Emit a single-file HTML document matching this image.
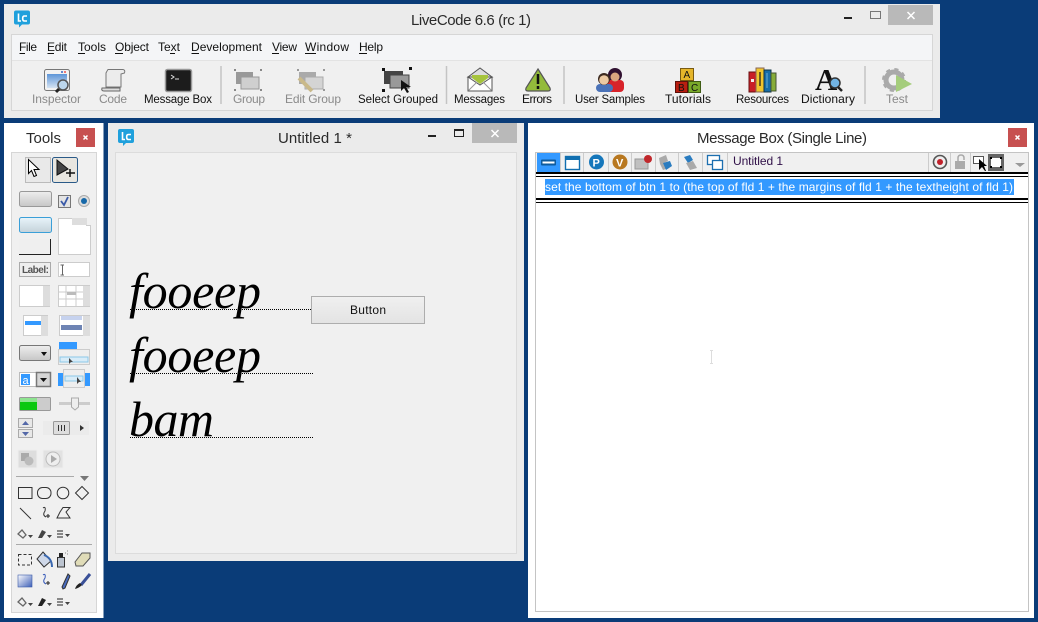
<!DOCTYPE html>
<html><head><meta charset="utf-8"><style>
html,body{margin:0;padding:0;background:#0a3c78;width:1038px;height:622px;overflow:hidden}
svg{display:block;position:absolute;left:0;top:0}
text{font-family:"Liberation Sans",sans-serif;font-size:12px;fill:#111}
.t{font-size:15px;fill:#2a2a2a}
.g{fill:#8a8a8a}
.n{font-size:11.5px}
.i{font-family:"Liberation Serif",serif;font-style:italic;font-size:50px;fill:#000}
.u{stroke:#111;stroke-width:1}
</style></head><body>
<svg width="1038" height="622" viewBox="0 0 1038 622" xmlns="http://www.w3.org/2000/svg">
<defs>
<linearGradient id="bt" x1="0" y1="0" x2="0" y2="1"><stop offset="0" stop-color="#f0f0f0"/><stop offset="1" stop-color="#e3e3e3"/></linearGradient>
<linearGradient id="bg" x1="0" y1="0" x2="0" y2="1"><stop offset="0" stop-color="#eee"/><stop offset="1" stop-color="#c6c6c6"/></linearGradient>
<linearGradient id="bb" x1="0" y1="0" x2="0" y2="1"><stop offset="0" stop-color="#e8f4fa"/><stop offset="1" stop-color="#c4d2da"/></linearGradient>
<linearGradient id="gr" x1="0" y1="0" x2="1" y2="1"><stop offset="0" stop-color="#fff"/><stop offset="1" stop-color="#3e60b8"/></linearGradient>
<linearGradient id="ins" x1="0" y1="0" x2="0" y2="1"><stop offset="0" stop-color="#5d95d8"/><stop offset="1" stop-color="#d5e3f2"/></linearGradient>
<g id="lc"><path d="M2 0H14Q16 0 16 2V12Q16 14 14 14H8L5 17V14H2Q0 14 0 12V2Q0 0 2 0Z" fill="#1fa0dc"/><path d="M4.500 3V10.500H7M13 5.500H10.500Q8.700 5.500 8.700 7.500V8.500Q8.700 10.500 10.500 10.500H13" fill="none" stroke="#fff" stroke-width="1.600"/></g>
<g id="ar"><path d="M0 0V14L3 11L5.500 17L8 16L5.500 10H10.500Z" fill="#fff" stroke="#000"/></g>
</defs>

<!-- main window -->
<rect x="4" y="4" width="936" height="114" fill="#ebebeb"/>
<use href="#lc" x="14" y="10.500"/>
<text class="t" x="411" y="25" textLength="120">LiveCode 6.6 (rc 1)</text>
<rect x="844" y="17" width="8" height="2" fill="#222"/>
<rect x="870.500" y="11.500" width="10" height="7" fill="none" stroke="#777"/>
<rect x="888" y="5" width="45" height="20" fill="#b9b9b9"/>
<path d="M907.500 12L914.500 19M914.500 12L907.500 19" stroke="#fff" stroke-width="1.500"/>
<rect x="11.500" y="34.500" width="921" height="76" fill="#f0f0f0" stroke="#d6d6d6"/>
<rect x="12" y="35" width="920" height="25" fill="#f4f5f7"/>
<path d="M12 60.500H932" stroke="#e3e3e3"/>
<g>
<text x="19" y="51" textLength="18">File</text><path class="u" d="M19.500 53.500H25"/>
<text x="47" y="51" textLength="20">Edit</text><path class="u" d="M47.500 53.500H54"/>
<text x="78" y="51" textLength="28">Tools</text><path class="u" d="M78 53.500H85"/>
<text x="115" y="51" textLength="34">Object</text><path class="u" d="M115 53.500H123"/>
<text x="158" y="51" textLength="22">Text</text><path class="u" d="M170 53.500H175"/>
<text x="191" y="51" textLength="71">Development</text><path class="u" d="M191.500 53.500H199"/>
<text x="272" y="51" textLength="25">View</text><path class="u" d="M272 53.500H279"/>
<text x="305" y="51" textLength="44">Window</text><path class="u" d="M305 53.500H316"/>
<text x="359" y="51" textLength="24">Help</text><path class="u" d="M359 53.500H367"/>
</g>
<g>
<text class="g" x="32" y="103" textLength="49">Inspector</text>
<text class="g" x="99" y="103" textLength="28">Code</text>
<text class="n" x="144" y="103" textLength="68">Message Box</text>
<text class="g" x="233" y="103" textLength="32">Group</text>
<text class="g" x="285" y="103" textLength="56">Edit Group</text>
<text class="n" x="358" y="103" textLength="80">Select Grouped</text>
<text class="n" x="454" y="103" textLength="51">Messages</text>
<text x="522" y="103" textLength="30">Errors</text>
<text class="n" x="575" y="103" textLength="70">User Samples</text>
<text x="665" y="103" textLength="46">Tutorials</text>
<text class="n" x="736" y="103" textLength="53">Resources</text>
<text x="801" y="103" textLength="54">Dictionary</text>
<text class="g" x="886" y="103" textLength="22">Test</text>
</g>
<path d="M221 66V104M446.500 66V104M564 66V104M865 66V104" stroke="#c4c4c4" stroke-width="1.500"/>

<!-- inspector -->
<rect x="44.500" y="69.500" width="25" height="21" rx="2" fill="#f2f2f2" stroke="#777"/>
<rect x="47" y="74" width="20" height="14" fill="url(#ins)"/>
<rect x="64" y="71" width="2" height="2" fill="#e77"/><rect x="61" y="71" width="2" height="2" fill="#68c"/>
<circle cx="63" cy="85" r="5" fill="#bcd6ec" stroke="#555" stroke-width="1.500"/><path d="M59 89L56 92" stroke="#222" stroke-width="3"/>
<!-- code -->
<path d="M108 69.500H123Q125.500 70 124.500 73L121 74V87H106V73Q107 71 108 69.500Z" fill="#ececec" stroke="#777"/>
<path d="M102 88H120V91H104Q101 91 102 88Z" fill="#ddd" stroke="#666"/>
<!-- message box -->
<rect x="165.500" y="69.500" width="26" height="22" rx="2" fill="#1c1c1c" stroke="#999" stroke-width="1.500"/>
<path d="M171 75L174 77L171 79M175 79H179" stroke="#ddd" fill="none"/>
<!-- group -->
<rect x="236" y="72" width="17" height="12" fill="#999"/>
<rect x="241" y="77" width="18" height="12" fill="#cfcfcf" stroke="#999"/>
<g fill="#888"><rect x="234" y="69" width="2" height="2"/><rect x="260" y="69" width="2" height="2"/><rect x="234" y="89" width="2" height="2"/><rect x="260" y="89" width="2" height="2"/></g>
<!-- edit group -->
<rect x="299" y="72" width="17" height="12" fill="#aaa"/>
<rect x="305" y="77" width="18" height="12" fill="#d4d4d4" stroke="#aaa"/>
<path d="M299 78L312 91" stroke="#c9b98a" stroke-width="4"/>
<g fill="#999"><rect x="297" y="69" width="2" height="2"/><rect x="323" y="69" width="2" height="2"/><rect x="323" y="89" width="2" height="2"/></g>
<!-- select grouped -->
<rect x="384" y="71" width="19" height="13" fill="#444"/>
<rect x="390" y="75" width="19" height="13" fill="#999" stroke="#444"/>
<g fill="#111"><rect x="382" y="68" width="3" height="3"/><rect x="409" y="67" width="3" height="3"/><rect x="382" y="89" width="3" height="3"/></g>
<path d="M401 80V91L404 88L407 93L409 92L406 87H411Z" fill="#111"/>
<!-- messages -->
<path d="M468 77L480 68L492 77Z" fill="#ddd" stroke="#555"/>
<path d="M468 77L480 85L492 77V91H468Z" fill="#fff" stroke="#555"/>
<path d="M472 75H488V78L480 84L472 78Z" fill="#a6c43c"/>
<path d="M468.500 90.500L477 82M491.500 90.500L483 82" stroke="#999"/>
<!-- errors -->
<path d="M538 69L550 88Q551 91 548 91H528Q525 91 526 88Z" fill="#93bb3b" stroke="#555" stroke-width="1.200"/>
<path d="M538 74V84M538 86V89" stroke="#111" stroke-width="2.500"/>
<!-- users -->
<circle cx="615" cy="75" r="7" fill="#301030"/><rect x="605" y="80" width="19" height="12" rx="4" fill="#d8232a"/><circle cx="615" cy="77" r="4.500" fill="#d9a47f"/>
<rect x="596" y="84" width="17" height="8" rx="4" fill="#4a72b8"/>
<circle cx="604" cy="79" r="6" fill="#3c2a20"/><circle cx="604" cy="80" r="4.800" fill="#ecc9a2"/>
<!-- blocks -->
<rect x="680.500" y="68.500" width="13" height="12" fill="#e5b52a" stroke="#7a5b12"/><rect x="675.500" y="81.500" width="12" height="11" fill="#b91e10" stroke="#5c100a"/><rect x="688.500" y="81.500" width="12" height="11" fill="#79a92a" stroke="#3f5c14"/>
<text x="683.500" y="78" style="font-size:10px" fill="#542">A</text><text x="678" y="91" style="font-size:10px">B</text><text x="691" y="91" style="font-size:10px">C</text>
<!-- books -->
<rect x="749" y="72" width="7" height="20" fill="#c91f26" stroke="#611"/><rect x="756" y="68" width="8" height="24" fill="#f0c52d" stroke="#865"/><rect x="764" y="70" width="7" height="22" fill="#176ca8" stroke="#134"/><rect x="771" y="73" width="5" height="18" fill="#87ad38" stroke="#453"/>
<rect x="751" y="79" width="3" height="3" fill="#eee"/><path d="M760 72V86" stroke="#6a5a20" stroke-width="2"/><path d="M767 73V88" stroke="#6ab0d8"/>
<!-- dictionary -->
<text x="815" y="90" style="font-family:'Liberation Serif',serif;font-size:31px;font-weight:bold">A</text>
<circle cx="835" cy="83" r="5" fill="#72b4e4" stroke="#333" stroke-width="1.500"/><path d="M838 87L842 91" stroke="#222" stroke-width="2.500"/>
<!-- test -->
<circle cx="894" cy="80" r="8" fill="#f0f0f0" stroke="#aaa" stroke-width="5"/><circle cx="894" cy="80" r="10.500" fill="none" stroke="#aaa" stroke-width="3" stroke-dasharray="4 4.250"/>
<path d="M896 75L912 84L896 92Z" fill="#a5cd7c"/>

<!-- tools window -->
<rect x="4" y="123" width="99.500" height="495" fill="#fff"/>
<text class="t" x="26" y="143" textLength="35">Tools</text>
<rect x="76" y="128" width="19" height="19" fill="#c75050"/><path d="M83.500 135.500L87.500 139.500M87.500 135.500L83.500 139.500" stroke="#fff" stroke-width="1.500"/>
<rect x="11.500" y="152.500" width="85" height="460" fill="#f0f0f0" stroke="#d6d6d6"/>
<rect x="25.500" y="157.500" width="25" height="25" fill="#e9e9e9" stroke="#bbb"/><use href="#ar" x="28.500" y="159.500"/>
<rect x="52.500" y="157.500" width="25" height="25" rx="2" fill="#e8e6e0" stroke="#2a5a88"/>
<path d="M57 160V175L68 169Z" fill="#444" stroke="#111"/><path d="M70 169V177M66 173H75" stroke="#111" stroke-width="1.500"/>
<rect x="19.500" y="191.500" width="32" height="15" rx="2" fill="url(#bg)" stroke="#999"/>
<rect x="58.500" y="195.500" width="12" height="12" fill="#e4e4e4" stroke="#777"/><path d="M61 201L64 205L68 197" stroke="#3a5aa8" stroke-width="1.800" fill="none"/>
<circle cx="84" cy="201" r="5.500" fill="#ddd" stroke="#aaa"/><circle cx="84" cy="201" r="3" fill="#1668a8"/>
<rect x="19.500" y="217.500" width="32" height="15" rx="2" fill="url(#bb)" stroke="#3a9fd8"/>
<rect x="19" y="239" width="31" height="15" fill="#efefef"/><path d="M19 254.500H50.500V239" stroke="#222" fill="none"/>
<path d="M58.500 218.500H86.500V225.500H90.500V254.500H58.500Z" fill="#fff" stroke="#ccc"/><rect x="72" y="218" width="15" height="7" fill="#ddd"/>
<rect x="19.500" y="262.500" width="31" height="14" fill="#eee" stroke="#666" stroke-dasharray="1 1"/>
<text x="22" y="273" textLength="27" style="font-size:10px;font-weight:bold;fill:#555">Label:</text>
<rect x="58.500" y="262.500" width="31" height="14" fill="#fff" stroke="#ccc"/><path d="M60.500 265H64M60.500 275H64M62.500 265V275" stroke="#666"/>
<rect x="19.500" y="285.500" width="30" height="21" fill="#fff" stroke="#ccc"/><rect x="43" y="286" width="7" height="20" fill="#ddd"/>
<rect x="58.500" y="285.500" width="31" height="21" fill="#fff" stroke="#ccc"/><path d="M59 292H83M59 299H83M66 286V306M76 286V306" stroke="#ccc"/><rect x="67" y="292" width="9" height="3" fill="#bbb"/><rect x="83" y="286" width="7" height="20" fill="#ddd"/>
<rect x="23.500" y="315.500" width="24" height="20" fill="#fff" stroke="#ccc"/><rect x="25" y="321" width="16" height="4" fill="#3399ff"/><rect x="41" y="316" width="7" height="20" fill="#ddd"/>
<rect x="59.500" y="315.500" width="30" height="20" fill="#fff" stroke="#ccc"/><rect x="61" y="316" width="21" height="4" fill="#c6d2ee"/><rect x="61" y="325" width="21" height="5" fill="#6e84b4"/><rect x="83" y="316" width="7" height="20" fill="#ddd"/>
<rect x="19.500" y="345.500" width="31" height="15" rx="2" fill="url(#bg)" stroke="#777"/><path d="M41 352H47L44 356Z" fill="#111"/>
<rect x="59" y="342" width="18" height="7" fill="#3399ff"/>
<rect x="58.500" y="349.500" width="31" height="15" fill="#eee" stroke="#ccc"/><rect x="60" y="357" width="28" height="5" fill="#d8ecf8" stroke="#8cc8e8"/><path d="M69 358V364L71 362H73Z" fill="#444"/>
<rect x="19.500" y="372.500" width="17" height="14" fill="#fff" stroke="#bbb"/><rect x="21" y="374" width="9" height="11" fill="#3399ff"/><text x="22.500" y="384" style="font-size:11px;fill:#fff">a</text>
<rect x="36.500" y="372.500" width="14" height="14" fill="#d6d6d6" stroke="#777" stroke-width="1.500"/><path d="M40 378H47L43.500 382Z" fill="#111"/>
<rect x="58" y="373" width="32" height="13" fill="#3399ff"/><rect x="63.500" y="369.500" width="21" height="18" fill="#eee" stroke="#ccc"/><rect x="65" y="376" width="18" height="5" fill="#d8ecf8" stroke="#8cc8e8"/><path d="M77 377V384L79 382H81Z" fill="#444"/>
<rect x="19.500" y="397.500" width="31" height="13" rx="1" fill="#ccc" stroke="#999"/><rect x="20" y="398" width="17" height="12" fill="#0ac80f"/><rect x="20" y="398" width="17" height="4" fill="#8ee490"/>
<path d="M59 403.500H90" stroke="#ccc" stroke-width="3"/><path d="M71.500 398H78.500V407L75 410L71.500 407Z" fill="#eee" stroke="#aaa"/>
<rect x="18.500" y="418.500" width="14" height="9" fill="#e8e8e8" stroke="#aaa"/><path d="M22 425H29L25.500 421Z" fill="#5468a8"/>
<rect x="18.500" y="429.500" width="14" height="8" fill="#e8e8e8" stroke="#aaa"/><path d="M22 432H29L25.500 436Z" fill="#5468a8"/>
<rect x="43" y="421" width="46" height="14" fill="#ebebeb"/><rect x="53.500" y="421.500" width="16" height="13" rx="1" fill="#ddd" stroke="#999"/><path d="M58.500 425V431M61.500 425V431M64.500 425V431" stroke="#333"/><path d="M80 425V431L84 428Z" fill="#333"/>
<rect x="18" y="450" width="19" height="18" fill="#ddd" stroke="#eee"/><rect x="21" y="453" width="8" height="8" fill="#aaa"/><circle cx="29" cy="461" r="4.500" fill="#bbb"/>
<rect x="43" y="450" width="20" height="18" fill="#e2e2e2" stroke="#eee"/><circle cx="53" cy="459" r="7" fill="#eee" stroke="#bbb"/><path d="M51 455V463L57 459Z" fill="#aaa"/>
<path d="M16 476.500H74" stroke="#aaa"/><path d="M80 476H89L84.500 481Z" fill="#777"/>
<g fill="none" stroke="#333"><rect x="18.500" y="487.500" width="13.500" height="11"/><rect x="37.500" y="487.500" width="13.500" height="11" rx="5"/><circle cx="63" cy="493" r="5.800"/><path d="M82 486.500L88.500 493L82 499.500L75.500 493Z"/>
<path d="M20 508L31 519"/><path d="M43 508Q46 506 45 511Q42 515 46 517"/><path d="M57 518L60 512L63 507.500H70L66 512L70 518Z"/></g>
<path d="M46 516H50M48 514V518" stroke="#222"/>
<path d="M18 534L22 530L26 535L23 538Z" fill="none" stroke="#666" stroke-width="1.300"/><path d="M28 535H33L30.500 538Z" fill="#444"/>
<path d="M38 538L42 530L46 532L42 538Z" fill="#444"/><path d="M47 535H52L49.500 538Z" fill="#444"/>
<path d="M57 531H63M57 534H63M57 537H63" stroke="#666" stroke-width="1.500"/><path d="M65 534H70L67.500 537Z" fill="#444"/>
<path d="M16 544.500H92" stroke="#aaa"/>
<rect x="18.500" y="554.500" width="13" height="10.500" fill="none" stroke="#333" stroke-dasharray="3 2"/>
<path d="M43 552L51 561L44 567L37 559Z" fill="#cfd8e8" stroke="#333"/><path d="M44 555Q52 558 52 567" fill="none" stroke="#3a68b0" stroke-width="2"/>
<rect x="57.500" y="557.500" width="7" height="9.500" fill="#bcc4d0" stroke="#333"/><rect x="59" y="553" width="4" height="4" fill="#222"/><path d="M65 553h1M67 551h1M67 554h1" stroke="#888"/>
<path d="M75 562L82 553H90L90 558L83 566H76Z" fill="#e0dcb8" stroke="#555"/>
<rect x="18" y="575" width="14" height="12" fill="url(#gr)" stroke="#3a5aa8" stroke-width=".6"/>
<path d="M43 575Q46 573 45 578Q42 582 46 584" fill="none" stroke="#3458b8"/><path d="M46 583H50M48 581V585" stroke="#222"/>
<path d="M68 574L62 587L63 589L65 588L70 576Z" fill="#4a6cc0" stroke="#333"/>
<path d="M90 574L81 585" stroke="#3a5098" stroke-width="3"/><path d="M75 589Q79 588 82 585L80 583Q76 585 75 589Z" fill="#222"/>
<path d="M18 602L22 598L26 603L23 606Z" fill="none" stroke="#666" stroke-width="1.300"/><path d="M28 603H33L30.500 606Z" fill="#444"/>
<path d="M38 606L42 598L46 600L42 606Z" fill="#222"/><path d="M47 603H52L49.500 606Z" fill="#444"/>
<path d="M57 599H63M57 602H63M57 605H63" stroke="#666" stroke-width="1.500"/><path d="M65 602H70L67.500 605Z" fill="#444"/>

<!-- stack window -->
<rect x="108" y="123" width="416" height="438" fill="#ebebeb"/>
<use href="#lc" x="118" y="129"/>
<text class="t" x="278" y="143" textLength="74">Untitled 1 *</text>
<rect x="428" y="135" width="8" height="2" fill="#222"/>
<rect x="454.500" y="129.500" width="9" height="7" fill="none" stroke="#222"/><path d="M454 130.500H464" stroke="#222"/>
<rect x="472" y="123" width="45" height="20" fill="#b9b9b9"/><path d="M491.500 130L498.500 137M498.500 130L491.500 137" stroke="#fff" stroke-width="1.500"/>
<rect x="115.500" y="152.500" width="401" height="401" fill="#f0f0f0" stroke="#dcdcdc"/>
<text class="i" x="129" y="308" textLength="132">fooeep</text>
<text class="i" x="129" y="372" textLength="132">fooeep</text>
<text class="i" x="129" y="436" textLength="85">bam</text>
<path d="M130 309.500H311M130 373.500H313M130 437.500H313" stroke="#000" stroke-dasharray="1 1"/>
<rect x="311.500" y="296.500" width="113" height="27" fill="url(#bt)" stroke="#adadad"/>
<text x="350" y="314" textLength="36">Button</text>

<!-- message box -->
<rect x="528" y="123" width="506" height="495" fill="#fff"/>
<text class="t" x="697" y="143" textLength="170">Message Box (Single Line)</text>
<rect x="1008" y="128" width="19" height="19" fill="#c75050"/><path d="M1015.500 135.500L1019.500 139.500M1019.500 135.500L1015.500 139.500" stroke="#fff" stroke-width="1.500"/>
<rect x="535.500" y="152.500" width="493" height="459" fill="#fff" stroke="#c4c4c4"/>
<rect x="536" y="153" width="492" height="19" fill="#f0f0f0"/>
<rect x="537" y="153" width="23" height="19" fill="#3399ff"/>
<rect x="541" y="159.500" width="15" height="6" rx="1" fill="#0f5c9e"/><rect x="542.500" y="161.500" width="12" height="2" fill="#fff"/>
<path d="M560.500 153V172M583.500 153V172M608.500 153V172M631.500 153V172M655.500 153V172M678.500 153V172M702.500 153V172M727.500 153V172M928.500 153V172M950.500 153V172M970.500 153V172" stroke="#ccc"/>
<rect x="565.500" y="156.500" width="14" height="13" fill="#fff" stroke="#116fb0" stroke-width="1.400"/><rect x="565" y="156" width="15" height="4" fill="#116fb0"/>
<circle cx="596.500" cy="162" r="7.500" fill="#1677bb"/><text x="592.500" y="166.500" style="font-size:11px;font-weight:bold;fill:#fff">P</text>
<circle cx="620" cy="162" r="7.500" fill="#b87820"/><text x="616" y="166.500" style="font-size:11px;font-weight:bold;fill:#fff">V</text>
<path d="M635 159H648V169H635Z" fill="#c0c0c0" stroke="#999"/><circle cx="648" cy="159" r="4" fill="#c0282c"/>
<path d="M659 158L666 155L668 161L664 163L669 168L663 170L660 164Z" fill="#aaa"/><path d="M663 163L670 161L672 166L666 170Z" fill="#2a7cc0"/>
<path d="M684 157L690 155L693 160L688 163Z" fill="#2a7cc0"/><path d="M686 163L693 161L697 168L690 170Z" fill="#aaa"/>
<rect x="707.500" y="155.500" width="12" height="9" fill="#fff" stroke="#1c6fb0" stroke-width="1.300"/><rect x="712.500" y="160.500" width="10" height="9" fill="#fff" stroke="#1c6fb0" stroke-width="1.300"/>
<text x="733" y="165" textLength="50" style="fill:#301048">Untitled 1</text>
<circle cx="940" cy="162" r="6.500" fill="#eee" stroke="#555" stroke-width="1.600"/><circle cx="940" cy="162" r="3" fill="#c0202a"/>
<rect x="955" y="161" width="10" height="8" fill="#aaa"/><path d="M958 161V158Q958 155 961 155Q964 155 964 158V160" fill="none" stroke="#aaa" stroke-width="1.500"/>
<rect x="973.500" y="156.500" width="10" height="7" fill="#fff" stroke="#555"/><path d="M979 159V170L982 167L985 171H986L984 166H987Z" fill="#000"/>
<rect x="988" y="154" width="16" height="17" fill="#666"/><rect x="991" y="158" width="10" height="9" fill="#fff"/><g fill="#000"><rect x="990" y="157" width="2" height="2"/><rect x="1000" y="157" width="2" height="2"/><rect x="990" y="166" width="2" height="2"/><rect x="1000" y="166" width="2" height="2"/></g>
<path d="M1015 163H1025L1020 167Z" fill="#999"/>
<rect x="536" y="172" width="492" height="2" fill="#000"/><rect x="536" y="176" width="492" height="1" fill="#000"/>
<rect x="536" y="198" width="492" height="2" fill="#000"/><rect x="536" y="202" width="492" height="1" fill="#000"/>
<rect x="545" y="179" width="469" height="16" fill="#3399ff"/>
<text x="545" y="191" textLength="468" style="fill:#fff">set the bottom of btn 1 to (the top of fld 1 + the margins of fld 1 + the textheight of fld 1)</text>
<path d="M710 350.500H713M710 363.500H713M711.500 351V363" stroke="#ddd"/>
</svg>
</body></html>
